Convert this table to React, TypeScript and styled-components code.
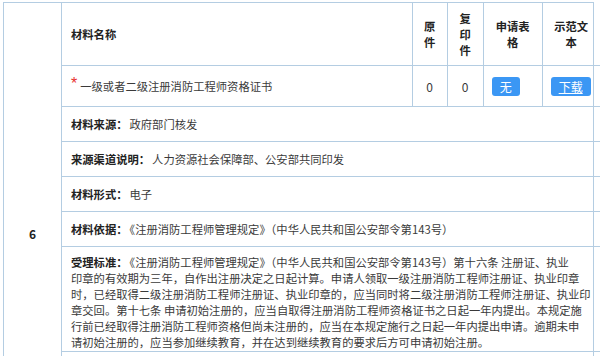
import React from 'react';
import styled, { createGlobalStyle } from 'styled-components';

const line = '#b4cde2';

const GlobalStyle = createGlobalStyle`
  html, body {
    margin: 0;
    padding: 0;
    background: #fff;
  }
  body {
    font-family: "Noto Sans CJK SC", "Microsoft YaHei", sans-serif;
    font-size: 11.3px;
    color: #3a3a3a;
  }
`;

const Page = styled.div`
  height: 356px;
  overflow: hidden;
  padding: 2px 0 0 3px;
  box-sizing: border-box;
`;

const Table = styled.div`
  display: grid;
  grid-template-columns: 58px 1fr;
  width: 591px;
  min-height: 462px;
  box-sizing: border-box;
  border: 1px solid ${line};
  border-bottom: none;
`;

const NumberCell = styled.div`
  display: flex;
  align-items: center;
  justify-content: center;
  border-right: 1px solid ${line};
  font-size: 12px;
  font-weight: bold;
  color: #222;
`;

const Content = styled.div`
  display: flex;
  flex-direction: column;
`;

const MaterialGrid = styled.div`
  display: grid;
  grid-template-columns: 1fr 35px 36px 59px 58px;
`;

const HeadCell = styled.div<{ $left?: boolean }>`
  height: 62px;
  display: flex;
  align-items: center;
  justify-content: ${({ $left }) => ($left ? 'flex-start' : 'center')};
  padding: ${({ $left }) => ($left ? '0 9px' : '0')};
  border-bottom: 1px solid ${line};
  border-left: ${({ $left }) => ($left ? 'none' : `1px solid ${line}`)};
  font-weight: bold;
  color: #222;
  text-align: center;
  line-height: 16px;
`;

const BodyCell = styled.div<{ $align?: 'left' | 'center'; $first?: boolean }>`
  height: 41px;
  display: flex;
  align-items: center;
  justify-content: ${({ $align }) => ($align === 'center' ? 'center' : 'flex-start')};
  padding: ${({ $first }) => ($first ? '0 9px' : '0 8px')};
  box-sizing: border-box;
  border-bottom: 1px solid ${line};
  border-left: ${({ $first }) => ($first ? 'none' : `1px solid ${line}`)};
  white-space: nowrap;
`;

const Required = styled.span`
  color: #e8322d;
  font-family: "Liberation Sans", sans-serif;
  font-size: 16px;
  line-height: 16px;
  align-self: flex-start;
  margin-top: 10px;
  margin-right: 3px;
`;

const Count = styled.span`
  font-size: 12px;
`;

const Button = styled.a<{ $link?: boolean }>`
  display: inline-block;
  height: 19px;
  line-height: 19px;
  padding: 0 8px;
  border-radius: 3px;
  background: #3b97f4;
  color: #fff;
  font-size: 12px;
  text-decoration: ${({ $link }) => ($link ? 'underline' : 'none')};
  cursor: pointer;
`;

const DetailRow = styled.div<{ $tall?: boolean }>`
  min-height: ${({ $tall }) => ($tall ? '96px' : '16px')};
  padding: ${({ $tall }) => ($tall ? '7px 9px 1px' : '9px 9px')};
  border-bottom: 1px solid ${line};
  line-height: 16px;
  white-space: nowrap;
`;

const TextLine = styled.div`
  white-space: nowrap;
`;

const Label = styled.b`
  font-weight: bold;
  color: #222;
  margin-right: 2px;
`;

const standard = [
  '《注册消防工程师管理规定》（中华人民共和国公安部令第143号）第十六条 注册证、执业',
  '印章的有效期为三年，自作出注册决定之日起计算。申请人领取一级注册消防工程师注册证、执业印章',
  '时，已经取得二级注册消防工程师注册证、执业印章的，应当同时将二级注册消防工程师注册证、执业印',
  '章交回。第十七条 申请初始注册的，应当自取得注册消防工程师资格证书之日起一年内提出。本规定施',
  '行前已经取得注册消防工程师资格但尚未注册的，应当在本规定施行之日起一年内提出申请。逾期未申',
  '请初始注册的，应当参加继续教育，并在达到继续教育的要求后方可申请初始注册。',
];

export default function App() {
  return (
    <Page>
      <GlobalStyle />
      <Table>
        <NumberCell>6</NumberCell>
        <Content>
          <MaterialGrid>
            <HeadCell $left>材料名称</HeadCell>
            <HeadCell>
              原<br />件
            </HeadCell>
            <HeadCell>
              复<br />印<br />件
            </HeadCell>
            <HeadCell>
              申请表
              <br />格
            </HeadCell>
            <HeadCell>
              示范文
              <br />本
            </HeadCell>

            <BodyCell $first>
              <Required>*</Required>一级或者二级注册消防工程师资格证书
            </BodyCell>
            <BodyCell $align="center">
              <Count>0</Count>
            </BodyCell>
            <BodyCell $align="center">
              <Count>0</Count>
            </BodyCell>
            <BodyCell>
              <Button>无</Button>
            </BodyCell>
            <BodyCell>
              <Button $link>下载</Button>
            </BodyCell>
          </MaterialGrid>

          <DetailRow>
            <Label>材料来源：</Label>政府部门核发
          </DetailRow>
          <DetailRow>
            <Label>来源渠道说明：</Label>人力资源社会保障部、公安部共同印发
          </DetailRow>
          <DetailRow>
            <Label>材料形式：</Label>电子
          </DetailRow>
          <DetailRow>
            <Label>材料依据：</Label>《注册消防工程师管理规定》（中华人民共和国公安部令第143号）
          </DetailRow>
          <DetailRow $tall>
            {standard.map((text, i) => (
              <TextLine key={i}>
                {i === 0 && <Label>受理标准：</Label>}
                {text}
              </TextLine>
            ))}
          </DetailRow>
        </Content>
      </Table>
    </Page>
  );
}
